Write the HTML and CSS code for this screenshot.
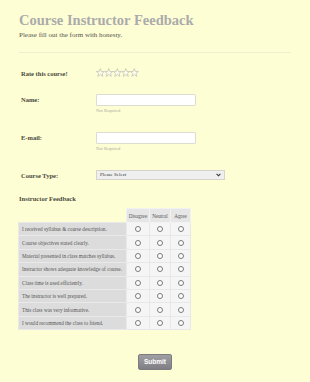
FILE: index.html
```html
<!DOCTYPE html>
<html lang="en">
	<head>
		<title>Course Instructor Feedback</title>
		<meta charset="UTF-8" />
		<link rel="stylesheet" href="styles.css">
	</head>
	<body>
		<form id="feedbackForm">
			<!-- Header -->
			<div class="form-header">
				<h1 class="title">Course Instructor Feedback</h1>
				<p class="subtitle">Please fill out the form with honesty.</p>
			</div>
			<div class="horz-separator"></div>

			<!-- Rating -->
			<div class="form-row rate-row">
				<label class="form-label">Rate this course!</label>
				<svg class="stars" width="43" height="10" viewBox="0 0 43 10">
					<g fill="#fbfbee" stroke="#bdbdb0" stroke-width="0.7">
						<polygon points="4.3,0.6 5.4,3.4 8.3,3.5 6,5.4 6.8,8.4 4.3,6.7 1.8,8.4 2.6,5.4 0.3,3.5 3.2,3.4"/>
						<polygon transform="translate(8.5 0)" points="4.3,0.6 5.4,3.4 8.3,3.5 6,5.4 6.8,8.4 4.3,6.7 1.8,8.4 2.6,5.4 0.3,3.5 3.2,3.4"/>
						<polygon transform="translate(17 0)" points="4.3,0.6 5.4,3.4 8.3,3.5 6,5.4 6.8,8.4 4.3,6.7 1.8,8.4 2.6,5.4 0.3,3.5 3.2,3.4"/>
						<polygon transform="translate(25.5 0)" points="4.3,0.6 5.4,3.4 8.3,3.5 6,5.4 6.8,8.4 4.3,6.7 1.8,8.4 2.6,5.4 0.3,3.5 3.2,3.4"/>
						<polygon transform="translate(34 0)" points="4.3,0.6 5.4,3.4 8.3,3.5 6,5.4 6.8,8.4 4.3,6.7 1.8,8.4 2.6,5.4 0.3,3.5 3.2,3.4"/>
					</g>
				</svg>
			</div>

			<!-- Name -->
			<div class="form-row name-row">
				<label class="form-label" for="name">Name:</label>
				<div class="input-field">
					<input type="text" id="name"/>
					<span class="sublabel">Not Required</span>
				</div>
			</div>

			<!-- E-mail -->
			<div class="form-row email-row">
				<label class="form-label" for="email">E-mail:</label>
				<div class="input-field">
					<input type="text" id="email"/>
					<span class="sublabel">Not Required</span>
				</div>
			</div>

			<!-- Course type -->
			<div class="form-row type-row">
				<label class="form-label" for="courseType">Course Type:</label>
				<div class="select-wrap">
					<select id="courseType">
						<option>Please Select</option>
					</select>
					<svg class="chevron" width="5" height="4" viewBox="0 0 5 4">
						<path d="M0.6 0.8 L2.5 2.8 L4.4 0.8" fill="none" stroke="#333" stroke-width="1.1"/>
					</svg>
				</div>
			</div>

			<!-- Matrix -->
			<h3 class="section-title">Instructor Feedback</h3>
			<table class="matrix">
				<thead>
					<tr>
						<th class="blank"></th>
						<th class="col-disagree">Disagree</th>
						<th class="col-neutral">Neutral</th>
						<th class="col-agree">Agree</th>
					</tr>
				</thead>
				<tbody>
					<tr>
						<td class="question">I received syllabus &amp; course description.</td>
						<td><input type="radio" name="q1"/></td><td><input type="radio" name="q1"/></td><td><input type="radio" name="q1"/></td>
					</tr>
					<tr>
						<td class="question">Course objectives stated clearly.</td>
						<td><input type="radio" name="q2"/></td><td><input type="radio" name="q2"/></td><td><input type="radio" name="q2"/></td>
					</tr>
					<tr>
						<td class="question">Material presented in class matches syllabus.</td>
						<td><input type="radio" name="q3"/></td><td><input type="radio" name="q3"/></td><td><input type="radio" name="q3"/></td>
					</tr>
					<tr>
						<td class="question">Instructor shows adequate knowledge of course.</td>
						<td><input type="radio" name="q4"/></td><td><input type="radio" name="q4"/></td><td><input type="radio" name="q4"/></td>
					</tr>
					<tr>
						<td class="question">Class time is used efficiently.</td>
						<td><input type="radio" name="q5"/></td><td><input type="radio" name="q5"/></td><td><input type="radio" name="q5"/></td>
					</tr>
					<tr>
						<td class="question">The instructor is well prepared.</td>
						<td><input type="radio" name="q6"/></td><td><input type="radio" name="q6"/></td><td><input type="radio" name="q6"/></td>
					</tr>
					<tr>
						<td class="question">This class was very informative.</td>
						<td><input type="radio" name="q7"/></td><td><input type="radio" name="q7"/></td><td><input type="radio" name="q7"/></td>
					</tr>
					<tr>
						<td class="question">I would recommend the class to friend.</td>
						<td><input type="radio" name="q8"/></td><td><input type="radio" name="q8"/></td><td><input type="radio" name="q8"/></td>
					</tr>
				</tbody>
			</table>

			<!-- Submit -->
			<div class="submit-row">
				<button id="submitButton" type="submit">Submit</button>
			</div>
		</form>
	</body>
</html>
```

FILE: styles.css
```css
html, body {
	margin: 0;
	padding: 0;
	background-color: #fefed5;
}

body {
	font-family: "Liberation Serif", "Times New Roman", serif;
	color: #4b4b3e;
}

#feedbackForm {
	padding: 12px 19px 0 19px;
}

.title {
	margin: 0;
	font-size: 14.5px;
	line-height: 17px;
	font-weight: bold;
	color: #ababab;
}

.subtitle {
	margin: 2px 0 0 0;
	font-size: 7px;
	line-height: 9px;
	color: #555550;
}

.horz-separator {
	height: 0;
	margin-top: 12px;
	border-top: 1px solid #efefd3;
}

.form-row {
	display: flex;
	align-items: center;
}

.form-label {
	width: 75px;
	padding-left: 2px;
	font-size: 6.5px;
	font-weight: bold;
	color: #4a4a3c;
}

.rate-row {
	margin-top: 15px;
	height: 10px;
}

.stars {
	display: block;
}

.name-row, .email-row {
	align-items: flex-start;
}

.name-row {
	margin-top: 16px;
}

.email-row {
	margin-top: 18px;
}

.name-row .form-label, .email-row .form-label {
	line-height: 12px;
}

.input-field {
	display: flex;
	flex-direction: column;
}

.input-field input {
	box-sizing: border-box;
	width: 100px;
	height: 12px;
	margin: 0;
	padding: 0 2px;
	border: 1px solid #dcdcd0;
	border-radius: 1px;
	background: #ffffff;
	outline: none;
}

.sublabel {
	margin-top: 2px;
	font-size: 4.5px;
	line-height: 6px;
	color: #a9a99c;
}

.type-row {
	margin-top: 18px;
}

.select-wrap {
	position: relative;
	width: 129px;
	height: 10px;
}

.select-wrap select {
	-webkit-appearance: none;
	appearance: none;
	display: block;
	box-sizing: border-box;
	width: 129px;
	height: 10px;
	margin: 0;
	padding: 0 3px;
	border: 1px solid #d4d4cc;
	border-radius: 0;
	background: #efefef;
	font-family: "Liberation Serif", "Times New Roman", serif;
	font-size: 5px;
	line-height: 8px;
	color: #333333;
}

.chevron {
	position: absolute;
	right: 4px;
	top: 3px;
}

.section-title {
	margin: 15px 0 0 0;
	font-size: 6.5px;
	line-height: 8px;
	font-weight: bold;
	color: #4a4a3c;
}

.matrix {
	margin-top: 5px;
	margin-left: -1px;
	border-collapse: collapse;
	font-size: 5.2px;
	color: #555555;
}

.matrix th {
	height: 13px;
	padding: 0;
	font-weight: normal;
	background: #e6e6e6;
	border: 1px solid #f2f2f2;
	text-align: center;
}

.matrix th.blank {
	background: transparent;
	border: none;
}

.col-disagree {
	width: 22px;
}

.col-neutral {
	width: 20px;
}

.col-agree {
	width: 19px;
}

.matrix td {
	height: 12.4px;
	padding: 0;
	border: 1px solid #e8e8e8;
	background: #f5f5f5;
	text-align: center;
	vertical-align: middle;
}

.matrix td.question {
	width: 104px;
	padding-left: 3px;
	text-align: left;
	background: #dcdcdc;
	border-color: #e9e9e9;
	white-space: nowrap;
}

.matrix input[type="radio"] {
	-webkit-appearance: none;
	appearance: none;
	display: block;
	box-sizing: border-box;
	width: 6px;
	height: 6px;
	margin: 0 auto;
	border: 0.7px solid #7a7a7a;
	border-radius: 50%;
	background: #ffffff;
}

.submit-row {
	margin-top: 20px;
	text-align: center;
}

#submitButton {
	box-sizing: border-box;
	width: 34px;
	height: 16px;
	padding: 0;
	border: 1px solid #7c7c80;
	border-radius: 2px;
	background: linear-gradient(#a0a0a4, #7e7e84);
	color: #ffffff;
	font-family: "Liberation Sans", Arial, sans-serif;
	font-size: 6.5px;
	font-weight: bold;
	cursor: pointer;
}
```
